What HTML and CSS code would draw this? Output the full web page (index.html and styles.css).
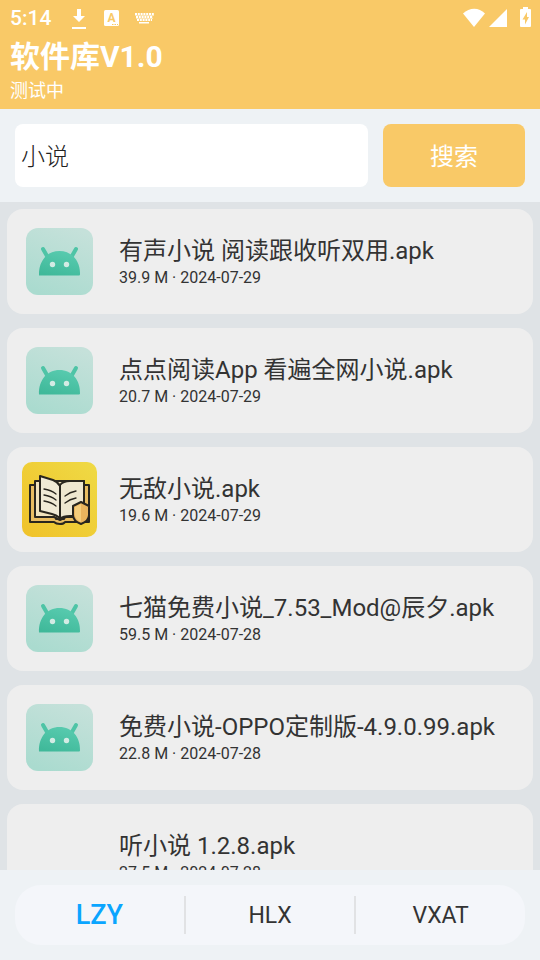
FILE: index.html
```html
<!DOCTYPE html>
<html lang="zh-CN">
<head>
<meta charset="utf-8">
<meta name="viewport" content="width=device-width, initial-scale=1">
<title>软件库V1.0</title>
<link rel="stylesheet" href="styles.css">
</head>
<body>
<svg class="defs" width="0" height="0" aria-hidden="true">
  <defs>
    <linearGradient id="mint" x1="0.7" y1="0" x2="0.3" y2="1"><stop offset="0" stop-color="#c5e1da"/><stop offset="1" stop-color="#aadbcf"/></linearGradient>
    <linearGradient id="robot" x1="0.7" y1="0" x2="0.3" y2="1"><stop offset="0" stop-color="#58cbaf"/><stop offset="1" stop-color="#40b99a"/></linearGradient>
    <linearGradient id="gold" x1="1" y1="0" x2="0" y2="1"><stop offset="0" stop-color="#efda45"/><stop offset="1" stop-color="#f0c229"/></linearGradient>
    <symbol id="apk" viewBox="0 0 67 67">
      <rect width="67" height="67" rx="12" fill="url(#mint)"/>
      <path d="M17 21l4 7M50 21l-4 7" stroke="#4ec4a6" stroke-width="4" stroke-linecap="round"/>
      <path d="M13 47.500C12.500 33 21 23 33.500 23S54.500 33 54 46.500q0 1-1 1z" fill="url(#robot)"/>
      <circle cx="26.500" cy="36.500" r="2.700" fill="#d3ebe4"/><circle cx="40.500" cy="36.500" r="2.700" fill="#d3ebe4"/>
    </symbol>
  </defs>
</svg>
<header class="header">
  <div class="status">
    <span class="clock">5:14</span>
    <svg class="status-left" width="88" height="24" viewBox="0 0 88 24" fill="#fff" aria-hidden="true">
      <path d="M6 3h4v7h4l-6 6-6-6h4zM1 21h14v2H1z"/>
      <rect x="33" y="4" width="15" height="16" rx="1.500"/>
      <text x="40.500" y="16" class="badge-letter">A</text>
      <path d="M41 18h1.500v1H41zM43.500 18H45v1h-1.500zM46 18h1v1h-1z" fill="#f9c967"/>
      <path d="M64 8h19M65 11h17M66 14h15" stroke="#fff" stroke-width="2" stroke-dasharray="2 .8"/>
      <path d="M64 9.500h19M65 12.500h17" stroke="#fff" stroke-opacity=".5"/>
      <path d="M68 16h10v1.500H68z"/>
    </svg>
    <svg class="status-right" width="67" height="24" viewBox="0 0 67 24" fill="#fff" aria-hidden="true">
      <path d="M0 7.500C6.500 1 16 1 22 7.500L11 21z"/>
      <path d="M26 21L44 3v18z"/>
      <path d="M58 3h2V1h5v2h2q1 0 1 1v16q0 1-1 1h-9q-1 0-1-1V4q0-1 1-1z"/>
      <path d="M64 6l-4.500 7.500h2.500v5l4-7.500h-2z" fill="#f9c967"/>
    </svg>
  </div>
  <h1 class="title">软件库V1.0</h1>
  <p class="subtitle">测试中</p>
</header>
<form class="search">
  <input class="search-input" type="text" value="小说" aria-label="搜索软件">
  <button class="search-button" type="button">搜索</button>
</form>
<main class="list">
  <article class="card">
    <svg class="icon" viewBox="0 0 67 67" aria-hidden="true"><use href="#apk"/></svg>
    <div class="info"><h2 class="name">有声小说 阅读跟收听双用.apk</h2><p class="meta">39.9 M · 2024-07-29</p></div>
  </article>
  <article class="card">
    <svg class="icon" viewBox="0 0 67 67" aria-hidden="true"><use href="#apk"/></svg>
    <div class="info"><h2 class="name">点点阅读App 看遍全网小说.apk</h2><p class="meta">20.7 M · 2024-07-29</p></div>
  </article>
  <article class="card">
    <svg class="icon icon-full" viewBox="0 0 75 75" aria-hidden="true">
      <rect width="75" height="75" rx="10" fill="url(#gold)"/>
      <g stroke="#29261e" stroke-width="2" stroke-linejoin="round" stroke-linecap="round">
        <path d="M8 23h26v34h8V23h25v37H43q-1 2-5 2t-6-2H8z" fill="#e9bd62"/>
        <path d="M13 19h49v36H44l-6 3-6-3H13z" fill="#f1e3bd"/>
        <path d="M38 23q3-4 10-4h14v35H48q-7 0-10 3z" fill="#eee7cf"/>
        <path d="M18 14l13 4q5 2 7 6v32q-4-3-8-4l-12-3z" fill="#f0ead5"/>
        <path d="M22 27q7 1 12 5M22 33q7 1 12 5M22 39q7 1 12 5M43 34q5-4 11-5M43 41q5-4 11-5" fill="none" stroke-width="1.300"/>
        <path d="M59 40l8 4v9q0 6-8 9-8-3-8-9v-9z" fill="#e9b45d"/>
      </g>
      <path d="M59 42v18q-6-3-6-7v-8z" fill="#f5cd7b"/>
    </svg>
    <div class="info"><h2 class="name">无敌小说.apk</h2><p class="meta">19.6 M · 2024-07-29</p></div>
  </article>
  <article class="card">
    <svg class="icon" viewBox="0 0 67 67" aria-hidden="true"><use href="#apk"/></svg>
    <div class="info"><h2 class="name">七猫免费小说_7.53_Mod@辰夕.apk</h2><p class="meta">59.5 M · 2024-07-28</p></div>
  </article>
  <article class="card">
    <svg class="icon" viewBox="0 0 67 67" aria-hidden="true"><use href="#apk"/></svg>
    <div class="info"><h2 class="name">免费小说-OPPO定制版-4.9.0.99.apk</h2><p class="meta">22.8 M · 2024-07-28</p></div>
  </article>
  <article class="card">
    <div class="icon"></div>
    <div class="info"><h2 class="name">听小说 1.2.8.apk</h2><p class="meta">27.5 M · 2024-07-28</p></div>
  </article>
</main>
<footer class="footer">
  <nav class="tabs">
    <button class="tab tab-active" type="button">LZY</button>
    <button class="tab" type="button">HLX</button>
    <button class="tab" type="button">VXAT</button>
  </nav>
</footer>
</body>
</html>
```

FILE: styles.css
```css
* {
  box-sizing: border-box;
  margin: 0;
}

body {
  display: flex;
  flex-direction: column;
  height: 100vh;
  background: #eef2f5;
  color: #333;
  font-family: Roboto, "Noto Sans CJK SC", sans-serif;
}

button,
input {
  border: 0;
  font-family: inherit;
}

.defs {
  position: absolute;
}

.header {
  padding: 0 10px 6px;
  background: #f9c967;
  color: #fff;
}

.status {
  display: flex;
  align-items: center;
  height: 36px;
}

.clock {
  font-size: 21px;
  font-weight: 500;
}

.status-left {
  margin-left: 20px;
}

.status-right {
  margin-left: auto;
  overflow: visible;
}

.badge-letter {
  fill: #f9c967;
  font-size: 12px;
  font-weight: 700;
  text-anchor: middle;
}

.title {
  font-size: 30px;
  font-weight: 700;
  line-height: 42px;
}

.subtitle {
  font-size: 18px;
  line-height: 25px;
}

.search {
  display: flex;
  gap: 15px;
  padding: 15px;
}

.search-input,
.search-button {
  min-width: 0;
  height: 63px;
  padding: 0 6px 2px;
  border-radius: 8px;
  font-size: 24px;
}

.search-input {
  flex: 1;
  background: #fff;
  color: #222;
  font-weight: 300;
}

.search-button {
  flex: 0 0 142px;
  background: #f9c967;
  color: #fff;
}

.list {
  display: flex;
  flex: 1;
  flex-direction: column;
  gap: 14px;
  min-height: 0;
  padding: 7px;
  overflow: hidden;
  background: #dfe3e6;
}

.card {
  display: flex;
  flex: none;
  align-items: center;
  gap: 26px;
  height: 105px;
  padding: 0 19px;
  border-radius: 16px;
  background: #eee;
}

.icon {
  flex: none;
  width: 67px;
  height: 67px;
}

.icon-full {
  width: 75px;
  height: 75px;
  margin: 0 -4px;
}

.name {
  font-size: 24px;
  font-weight: 400;
  line-height: 32px;
}

.meta {
  font-size: 16px;
  line-height: 22px;
}

.footer {
  padding: 15px;
}

.tabs {
  display: flex;
  align-items: center;
  height: 60px;
  border-radius: 26px;
  background: #f4f6fa;
}

.tab {
  flex: 1;
  height: 38px;
  padding: 0;
  background: none;
  color: #333;
  font-size: 23px;
}

.tab + .tab {
  border-left: 2px solid #e1e2e4;
}

.tab-active {
  color: #0aa5ff;
  font-size: 27px;
  font-weight: 500;
}
```
